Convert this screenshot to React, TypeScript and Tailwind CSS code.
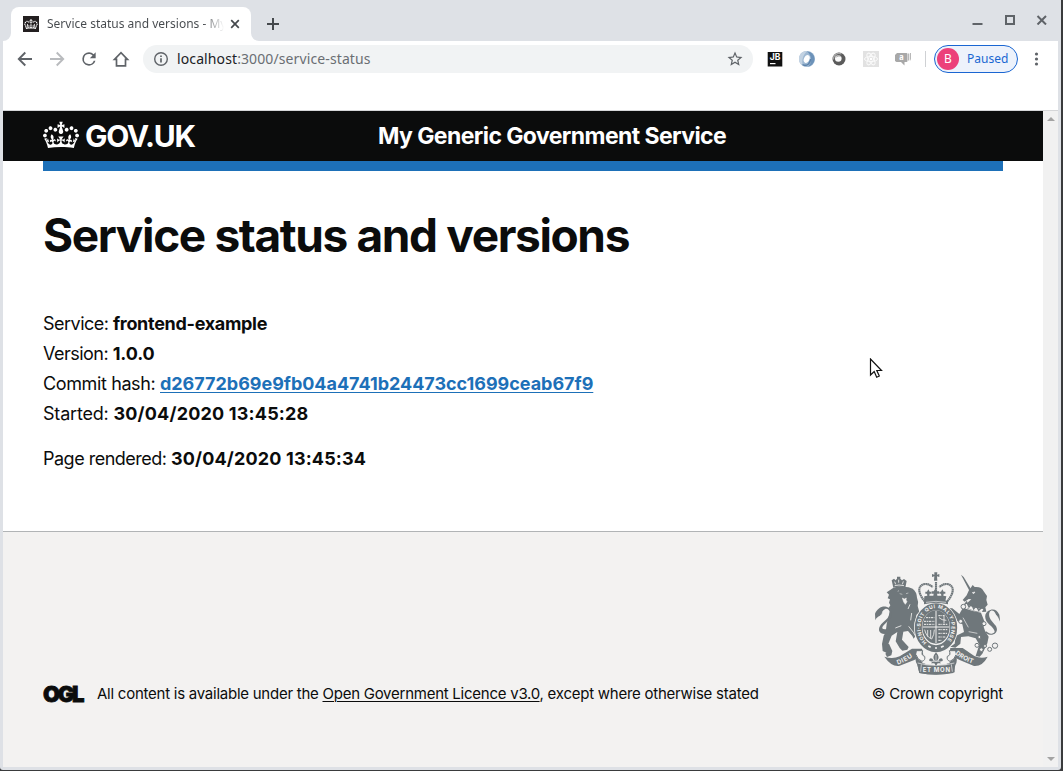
import React from "react";

const CROWN =
  "M25 30.2c3.5 1.5 7.7-.2 9.1-3.7 1.5-3.6-.2-7.8-3.9-9.2-3.6-1.4-7.6.3-9.1 3.9-1.4 3.5.3 7.5 3.9 9zM9 39.5c3.6 1.5 7.8-.2 9.2-3.7 1.5-3.6-.2-7.8-3.9-9.1-3.6-1.5-7.6.2-9.1 3.8-1.4 3.5.3 7.5 3.8 9zM4.4 57.2c3.5 1.5 7.7-.2 9.1-3.8 1.5-3.6-.2-7.7-3.9-9.1-3.5-1.5-7.6.3-9.1 3.8-1.4 3.5.3 7.6 3.9 9.1zm38.3-21.4c3.5 1.5 7.7-.2 9.1-3.8 1.5-3.6-.2-7.7-3.9-9.1-3.6-1.5-7.6.3-9.1 3.8-1.3 3.6.4 7.7 3.9 9.1zm64.4-5.6c-3.6 1.5-7.8-.2-9.1-3.7-1.5-3.6.2-7.8 3.8-9.2 3.6-1.4 7.7.3 9.2 3.9 1.3 3.5-.4 7.5-3.9 9zm15.9 9.3c-3.6 1.5-7.7-.2-9.1-3.7-1.5-3.6.2-7.8 3.7-9.1 3.6-1.5 7.7.2 9.2 3.8 1.5 3.5-.3 7.5-3.8 9zm4.7 17.7c-3.6 1.5-7.8-.2-9.2-3.8-1.5-3.6.2-7.7 3.9-9.1 3.6-1.5 7.7.3 9.2 3.8 1.3 3.5-.4 7.6-3.9 9.1zM89.3 35.8c-3.6 1.5-7.8-.2-9.2-3.8-1.4-3.6.2-7.7 3.9-9.1 3.6-1.5 7.7.3 9.2 3.8 1.4 3.6-.3 7.7-3.9 9.1zM69.7 17.7l8.9 4.7V9.3l-8.9 2.8c-.2-.3-.5-.6-.9-.9L72.4 0H59.6l3.5 11.2c-.3.3-.6.5-.9.9l-8.8-2.8v13.1l8.8-4.7c.3.3.6.7.9.9l-5 15.4v.1c-.2.8-.4 1.6-.4 2.4 0 4.1 3.1 7.5 7 8.1h.2c.3 0 .7.1 1 .1.4 0 .7 0 1-.1h.2c4-.6 7.1-4.1 7.1-8.1 0-.8-.1-1.7-.4-2.4V34l-5.1-15.4c.4-.2.7-.6 1-.9zM66 92.8c16.9 0 32.8 1.1 47.1 3.2 4-16.9 8.9-26.7 14-33.5l-9.6-3.4c1 4.9 1.1 7.2 0 10.2-1.5-1.4-3-4.3-4.2-8.7L108.6 76c2.8-2 5-3.2 7.5-3.3-4.4 9.4-10 11.9-13.6 11.2-4.3-.8-6.3-4.6-5.6-7.9 1-4.7 5.7-5.9 8-.5 4.3-8.7-3-11.4-7.6-8.8 7.1-7.2 7.9-13.5 2.1-21.1-8 6.1-8.1 12.3-4.5 20.8-4.7-5.4-12.1-2.5-9.5 6.2 3.4-5.2 7.9-2 7.2 3.1-.6 4.3-6.4 7.8-13.5 7.2-10.3-.9-10.9-8-11.2-13.8 2.5-.5 7.1 1.8 11 7.3L80.2 60c-4.1 4.4-8 5.3-12.3 5.4 1.4-4.4 8-11.6 8-11.6H55.5s6.4 7.2 7.9 11.6c-4.2-.1-8-1-12.3-5.4l1.4 16.4c3.9-5.5 8.5-7.7 10.9-7.3-.3 5.8-.9 12.8-11.1 13.8-7.2.6-12.9-2.9-13.5-7.2-.7-5 3.8-8.3 7.1-3.1 2.7-8.7-4.6-11.6-9.4-6.2 3.7-8.5 3.6-14.7-4.6-20.8-5.8 7.6-5 13.9 2.2 21.1-4.7-2.6-11.9.1-7.7 8.8 2.3-5.5 7.1-4.2 8.1.5.7 3.3-1.3 7.1-5.7 7.9-3.5.7-9-1.8-13.5-11.2 2.5.1 4.7 1.3 7.5 3.3l-4.7-15.4c-1.2 4.4-2.7 7.2-4.3 8.7-1.1-3-.9-5.3 0-10.2l-9.5 3.4c5 6.9 9.9 16.7 14 33.5 14.8-2.1 30.8-3.2 47.7-3.2z";

function Crown({ className }: { className: string }) {
  return (
    <svg viewBox="0 0 132 97" className={className} fill="currentColor">
      <path fillRule="evenodd" d={CROWN} />
    </svg>
  );
}

function TabStrip() {
  return (
    <div className="flex h-[41px] shrink-0 bg-[#dee1e6] pl-2">
      <div className="relative mt-[7px] flex h-[34px] w-[240px] items-center rounded-t-lg bg-white pl-3">
        <svg className="absolute -left-2 bottom-0 size-2 fill-white" viewBox="0 0 8 8">
          <path d="M8 0v8H0a8 8 0 0 0 8-8z" />
        </svg>
        <svg className="absolute -right-2 bottom-0 size-2 fill-white" viewBox="0 0 8 8">
          <path d="M0 0v8h8a8 8 0 0 1-8-8z" />
        </svg>
        <span className="flex size-4 items-center justify-center bg-[#231f20] text-white">
          <Crown className="h-[10px] w-[14px]" />
        </span>
        <span className="ml-2 w-[177px] whitespace-nowrap bg-gradient-to-r from-[#45494d] from-88% to-transparent bg-clip-text text-[12px] leading-5 text-transparent">
          Service status and versions - My
        </span>
        <svg className="ml-[6px] size-2.5" viewBox="0 0 10 10" stroke="#45494d" strokeWidth="1.7">
          <path d="M1.200 1.200l7.600 7.600M8.800 1.200l-7.600 7.600" />
        </svg>
      </div>
      <svg className="ml-4 mt-[18px] size-3" viewBox="0 0 12 12" stroke="#45494d" strokeWidth="2">
        <path d="M6 0v12M0 6h12" />
      </svg>
      <div className="ml-auto mr-[14px] mt-[14px] flex h-3 gap-[21px]">
        <svg className="size-[11px]" viewBox="0 0 11 11">
          <path d="M.5 9h10v2H.5z" fill="#5f6368" />
        </svg>
        <svg className="size-[11px]" viewBox="0 0 11 11" fill="none" stroke="#5f6368" strokeWidth="2">
          <path d="M2 2h8v8H2z" />
        </svg>
        <svg className="size-[11px]" viewBox="0 0 11 11" stroke="#5f6368" strokeWidth="2">
          <path d="M1.500 2l8.500 8.500M10 2l-8.500 8.500" />
        </svg>
      </div>
    </div>
  );
}

function Toolbar() {
  return (
    <div className="flex h-[70px] shrink-0 items-start border-b border-[#d5d6d8] bg-white pt-[4px]">
      <div className="flex h-7 items-center pl-[12px]">
        <svg className="size-5" viewBox="0 0 20 20" fill="none" stroke="#5f6368" strokeWidth="1.9">
          <path d="M17 10H4M10.300 3.500L3.800 10l6.500 6.500" />
        </svg>
        <svg className="ml-3 size-5" viewBox="0 0 20 20" fill="none" stroke="#b9bbbe" strokeWidth="1.9">
          <path d="M3 10h13M9.700 3.500l6.500 6.500-6.500 6.500" />
        </svg>
        <svg className="ml-3 size-5" viewBox="0 0 24 24" fill="#5f6368">
          <path d="M17.650 6.350A7.958 7.958 0 0 0 12 4a8 8 0 1 0 7.730 10h-2.080A6 6 0 1 1 12 6c1.660 0 3.140.69 4.220 1.780L13 11h7V4l-2.350 2.350z" />
        </svg>
        <svg className="ml-3 size-5" viewBox="0 0 20 20" fill="none" stroke="#5f6368" strokeWidth="1.7">
          <path d="M3.500 10.300h2v6.500h9v-6.500h2L10 3.600z" />
        </svg>
      </div>
      <div className="ml-3 flex h-7 w-[610px] items-center rounded-full bg-[#f1f3f4] pl-[10px] pr-[9px]">
        <svg className="size-4" viewBox="0 0 16 16" fill="none" stroke="#5f6368" strokeWidth="1.400">
          <circle cx="8" cy="8" r="6.300" />
          <path d="M8 7.300v4.200M8 4.500V6" strokeWidth="1.700" />
        </svg>
        <span className="ml-[8px] text-[14px] leading-5 tracking-[0.11px] text-[#6a6e73]">
          <span className="text-[#202124]">localhost</span>:3000/service-status
        </span>
        <svg className="ml-auto size-[18px]" viewBox="0 0 24 24" fill="#5f6368">
          <path d="M22 9.240l-7.190-.62L12 2 9.190 8.630 2 9.240l5.460 4.730L5.820 21 12 17.270 18.180 21l-1.630-7.030L22 9.240zM12 15.400l-3.760 2.270 1-4.280-3.320-2.880 4.380-.38L12 6.100l1.710 4.040 4.380.38-3.320 2.880 1 4.280L12 15.400z" />
        </svg>
      </div>
      <div className="flex h-7 items-center pl-[14px]">
        <svg className="size-4" viewBox="0 0 16 16">
          <rect x=".7" y="1" width="14.600" height="14.500" fill="#111" />
          <text x="2.700" y="8.700" fontSize="8.500" fontWeight="700" fill="#fff" fontFamily="Inter">JB</text>
          <path d="M3 12h5.500v1.200H3z" fill="#fff" />
        </svg>
        <svg className="ml-4 size-4" viewBox="0 0 16 16">
          <circle cx="8" cy="8" r="8" fill="#9fb9d3" />
          <path d="M8 0a8 8 0 0 0-4 15c-2-5 0-11 4-15z" fill="#c2d2e2" />
          <path d="M8 .5c5 0 7.500 4 7.500 7.500 0 4-3 7-6.500 7.500 2-2 3.500-4 3-8C11.600 4.500 10 2 8 .5z" fill="#6c92b9" />
          <path d="M3.500 13.500c2 1.500 4 1 6-.5 2-2 2-3 2-5" fill="none" stroke="#5d83ab" strokeWidth="1.500" />
          <ellipse cx="7.700" cy="8" rx="2.700" ry="4" transform="rotate(25 7.700 8)" fill="#fff" />
        </svg>
        <svg className="ml-4 size-4" viewBox="0 0 16 16">
          <circle cx="8" cy="8" r="6.500" fill="#5b5b5b" />
          <path d="M2.500 8.500a5.500 5.500 0 0 1 8-5.500" fill="none" stroke="#a5a5a5" strokeWidth="1.300" />
          <circle cx="7.300" cy="7.500" r="3.300" fill="#fafafa" />
          <path d="M5 6.500a3 3 0 0 1 4.500-1" fill="none" stroke="#999" />
        </svg>
        <svg className="ml-4 size-4" viewBox="0 0 16 16">
          <path d="M0 0h16v16H0z" fill="#e2e2e2" />
          <g fill="none" stroke="#fafafa" strokeWidth="1">
            <ellipse cx="8" cy="8" rx="6.500" ry="2.600" />
            <ellipse cx="8" cy="8" rx="6.500" ry="2.600" transform="rotate(60 8 8)" />
            <ellipse cx="8" cy="8" rx="6.500" ry="2.600" transform="rotate(120 8 8)" />
          </g>
          <circle cx="8" cy="8" r="1.300" fill="#fff" />
        </svg>
        <svg className="ml-4 size-4" viewBox="0 0 16 16">
          <path d="M2 2h9.500q1 0 1 1v7q0 1-1 1H9.500v3.500L6 11H1.500L0 10V4z" fill="#a8a8a8" />
          <path d="M13 2.500h1.300v7H13zM15 2h1v6l-1 2z" fill="#b8b8b8" />
          <text x="4.300" y="9.200" fontSize="7.500" fontWeight="700" fill="#fff" fontFamily="Inter">a</text>
        </svg>
        <span className="ml-[14px] h-4 w-px bg-[#cfd1d4]" />
        <div className="ml-2 flex h-7 w-[84px] items-center rounded-full border border-[#1a66d2] bg-[#edf2fb] pl-[2px]">
          <span className="flex size-[22px] items-center justify-center rounded-full bg-[#ec407a] text-[12px] leading-none text-white">
            B
          </span>
          <span className="ml-[8px] text-[12px] leading-5 text-[#1967d2]">Paused</span>
        </div>
        <svg className="ml-[11px] size-4" viewBox="0 0 16 16" fill="#5f6368">
          <circle cx="7.500" cy="3" r="1.600" />
          <circle cx="7.500" cy="8" r="1.600" />
          <circle cx="7.500" cy="13" r="1.600" />
        </svg>
      </div>
    </div>
  );
}

function Crest() {
  const bg = "#f3f2f1";
  const label = { fill: bg, fontFamily: "Inter", fontWeight: 700 };
  return (
    <svg className="h-[103px] w-[125px]" viewBox="45 35 375 309" fill="#6f777b">
      <defs>
        <path id="motto" d="M200.500 246A46.500 57 0 1 1 255.500 246" />
        <path id="ribbonLeft" d="M113 313Q140 304 167 283" />
        <path id="ribbonRight" d="M285 281Q312 302 346 312" />
      </defs>
      {/* imperial crown */}
      <path d="M223 36h9l-1 7 7-2v9l-7-2 1 13h-10l1-13-7 2v-9l7 2z" />
      <path d="M194 123C171 95 174 75 194 71q14-1 24 10M262 123c23-28 20-48 0-52q-14-1-24 10M228 65v58" fill="none" stroke="#6f777b" strokeWidth="6.500" strokeDasharray="5 1" />
      <path d="M193 108l9-2-1-6h-5v-6h5l4-7 4 7h5v6h-5l-1 6h12l1-6h-6v-7h6l5-8 5 8h6v7h-6l1 6h12l-1-6h-5v-6h5l4-7 4 7h5v6h-5l-1 6 9 2-3 15q-32-7-64 0z" />
      <path d="M192 122q36-10 72 0v10q-36-8-72 0z" />
      <path d="M198 126q30-6 60 0" stroke={bg} strokeWidth="2" fill="none" />
      {/* lion */}
      <path d="M100 82l-5-22 7-5 5 5 4-5 0-6h10l0 6 5 5 6-4 8 6-4 20q-17-6-36 0z" />
      <path d="M104 64l3 8M130 63l-3 9M116 58v9M104 76q12-4 28 0" stroke={bg} strokeWidth="2.500" fill="none" />
      <path d="M98 84q10-6 28-5 20-1 32 6 12 9 13 27 5 10 2 25l5 18-9 9-1 24 8 25-15 22-4-8-13-15-14 2-4 24 20 22-4 8-15 3-8-8-12-20 5-28-17 11-9 22 11 24-3 13-13 5-5-10 3-3-11-5-2-21 5-25 6-10 3-25 7-28 4-14-5-6 5-8-4-8 3-10-7-3 4-11-7-7 7-5z" />
      <path d="M127 113l6 3 6-3-1 6 3 5-5 8-5-7zM119 100l8 2M138 100l7-2M113 93l4-2" fill={bg} stroke={bg} strokeWidth="1.500" />
      <path d="M106 203l18-7M146 198l14 18 8 14M96 238l-10 12M155 158l-3 22M150 132l-6 14" fill="none" stroke={bg} strokeWidth="2.500" />
      <path d="M90 216c-24 12-40-1-30-19 8-14 30-21 29-42-1-10-12-14-19-5-4 5-1 13-11 17-5 2-10 5-13 13l-1-20c7-16 20-24 34-21 22 5 22 30 5 43-13 12-26 24-9 25 8 0 12-5 12-5z" />
      <path d="M58 169q10-8 11-17" fill="none" stroke={bg} strokeWidth="2" />
      {/* unicorn */}
      <path d="M303 43l8 7 24 40-6 3z" />
      <path d="M334 80l4-6 6 6q21-2 27 13l10 14-2 12 4 14-7 8 3 13-27 2-18-7-13-5 3-18 10-9-8-1-12 8-6-5 12-14 6-14z" />
      <path d="M312 126q26 20 58 20l-4 9q-31-1-56-20z" fill={bg} />
      <path d="M313 134l7-9 7 15 8-9 6 15 8-10 7 14 8-7" fill="none" stroke="#6f777b" strokeWidth="4" />
      <path d="M309 142q23 9 54 15l11 28-3 15 4 11 11 18-4 20-15 31-8 9-12-2 11-34-11-19-22-6-22 2-2 20-15 12-15-3 13-9 3-23 25-12-5-23-14-9-11-16-9-19-3 12 7 15-4 9-10-8-6-23 4-10 16 1 21 17z" />
      <path d="M337 97l8-2-4 5zM309 172l16 29M352 219l-26-5" fill={bg} stroke={bg} strokeWidth="2" />
      <path d="M378 218c20 15 43-3 28-23-8-11-24-24-17-40 5-9 14-4 17 4 3 9 8 7 15 27l-3-23c-6-12-15-18-27-14-22 7-18 31-4 43 13 11 26 26 8 28-6 1-13-4-17-7z" />
      <path d="M401 157l12 14" fill="none" stroke={bg} strokeWidth="2" />
      <g fill={bg} stroke="#6f777b" strokeWidth="3">
        <circle cx="351" cy="255" r="6" />
        <circle cx="364" cy="268" r="5.500" />
        <circle cx="375" cy="257" r="4.500" />
        <circle cx="389" cy="267" r="6" />
        <circle cx="405" cy="256" r="8" />
        <circle cx="358" cy="230" r="4.500" />
        <circle cx="372" cy="190" r="6" />
        <circle cx="302" cy="183" r="6" />
        <circle cx="310" cy="139" r="7" />
      </g>
      {/* garter and shield */}
      <ellipse cx="228" cy="202" rx="66" ry="75" fill={bg} />
      <ellipse cx="228" cy="202" rx="53" ry="63" fill="none" stroke="#6f777b" strokeWidth="21" />
      <text {...label} fontSize="15">
        <textPath href="#motto" textLength="256">HONI·SOIT QUI MAL·Y·PENSE</textPath>
      </text>
      <path d="M205 257l7 4M225 263h6M243 261l8-4" stroke={bg} strokeWidth="5" />
      <ellipse cx="228" cy="200" rx="41" ry="50" />
      <path d="M228 152v96M188 200h80" stroke={bg} strokeWidth="3" />
      <path d="M198 172h25M192 183h31M192 192h31M235 166h18M235 192h29M235 208h29M235 219h27M235 230h22M235 240h10" stroke={bg} strokeWidth="3" strokeDasharray="7 2 3 2" />
      <path d="M237 172q8 8 22 8M252 164v25M194 208q5 22 21 28 8-13 8-28M203 209v20M212 209v24" fill="none" stroke={bg} strokeWidth="2.500" />
      {/* ribbons */}
      <path d="M73 289q25 9 46-1l37-23h30l4 18-27 16-46 18q-22 3-44-28z" />
      <path d="M383 289q-20 7-40-2l-35-24h-37l-3 20 31 16 43 18q25 2 41-28z" />
      <path d="M170 286q-8 11 2 28l6 24q50 10 102 0l6-23q9-17 0-29l-19 23q-39 11-78 0z" />
      <path d="M196 284h64v29h-64z" fill={bg} />
      <path d="M172 312q56 14 112 0v24q-56 12-106 2z" />
      <path d="M171 271h17q-6 14 6 17 3 12-8 15-14-5-18-20M285 271h-17q6 14-6 17-3 12 8 15 14-5 18-20" fill={bg} stroke="#6f777b" strokeWidth="3" />
      <path d="M173 308q54 15 110 0M184 312l-2 22M274 312l3 22" stroke={bg} strokeWidth="2" fill="none" />
      <text {...label} fontSize="19"><textPath href="#ribbonLeft" textLength="51">DIEU</textPath></text>
      <text {...label} fontSize="19"><textPath href="#ribbonRight" textLength="60">DROIT</textPath></text>
      <text {...label} x="188" y="335" fontSize="18" textLength="82">ET MON</text>
      {/* fleur-de-lis */}
      <path d="M228 276q-14 16-3 25h-5c-3-11-14-9-12 1l5 1 4 1-4 5h10l5 8 5-8h10l-4-5 9-2c2-10-9-12-12-1h-5q11-9-3-25z" />
      <path d="M228 284v21M216 303h23" stroke={bg} strokeWidth="2" />
    </svg>
  );
}

function Page() {
  return (
    <div className="flex w-[1040px] flex-col bg-white font-['Inter',sans-serif] text-[#0b0c0c]">
      <header className="h-[50px] bg-[#0b0c0c] px-10 text-white">
        <div className="flex h-[50px] items-center">
          <Crown className="-mt-[3px] h-[28px] w-[36px]" />
          <span className="ml-[6px] w-[293px] text-[30px] font-bold leading-[49px] tracking-[-1.3px]">GOV.UK</span>
          <span className="whitespace-nowrap text-[23px] font-bold leading-[50px] tracking-[-0.59px]">
            My Generic Government Service
          </span>
        </div>
      </header>
      <div className="mx-10 h-[10px] bg-[#1d70b8]" />
      <main className="px-10">
        <h1 className="mt-[40px] whitespace-nowrap text-[46px] font-bold leading-[49px] tracking-[-1.37px]">
          Service status and versions
        </h1>
        <div className="mt-[49px] whitespace-nowrap text-[18px] leading-[30px]">
          <p><span className="tracking-[-0.52px]">Service: </span><b className="tracking-[-0.3px]">frontend-example</b></p>
          <p><span className="tracking-[-0.52px]">Version: </span><b className="tracking-[-0.1px]">1.0.0</b></p>
          <p>
            <span className="tracking-[-0.38px]">Commit hash: </span>
            <a className="font-bold tracking-[-0.03px] text-[#1d70b8] underline decoration-1 underline-offset-2">
              d26772b69e9fb04a4741b24473cc1699ceab67f9
            </a>
          </p>
          <p><span className="tracking-[-0.19px]">Started: </span><b className="tracking-[0.19px]">30/04/2020 13:45:28</b></p>
          <p className="mt-[15px]"><span className="tracking-[-0.5px]">Page rendered: </span><b className="tracking-[0.15px]">30/04/2020 13:45:34</b></p>
        </div>
      </main>
      <footer className="mt-[57px] flex flex-1 items-start justify-between border-t border-[#b1b4b6] bg-[#f3f2f1] px-10 pt-10">
        <div className="mt-[112px] flex h-5 items-center whitespace-nowrap text-[15px] leading-5">
          <span className="w-[54px] text-[22px] font-black leading-5 tracking-[-2.300px] [-webkit-text-stroke:0.8px_#0b0c0c]">OGL</span>
          <span className="tracking-[-0.25px]">
            All content is available under the{" "}
            <a className="underline decoration-1 underline-offset-2">Open Government Licence v3.0</a>, except where
            otherwise stated
          </span>
        </div>
        <div className="flex flex-col items-end">
          <div className="mr-[3px]"><Crest /></div>
          <span className="mt-[9px] whitespace-nowrap text-[15px] leading-5 tracking-[-0.27px]">© Crown copyright</span>
        </div>
      </footer>
    </div>
  );
}

function Scrollbar() {
  return (
    <div className="flex w-[15px] flex-col items-center justify-between bg-[#f1f1f1] py-[6px]">
      <svg className="h-1 w-2" viewBox="0 0 8 4" fill="#a3a3a3"><path d="M4 0l4 4H0z" /></svg>
      <svg className="h-1 w-2" viewBox="0 0 8 4" fill="#a3a3a3"><path d="M4 4l4-4H0z" /></svg>
    </div>
  );
}

export default function App() {
  return (
    <div className="relative h-[771px] w-[1063px] overflow-hidden bg-[#3a3b3d] pb-px pr-[2px] font-['Noto_Sans',sans-serif]">
      <div className="flex h-[770px] flex-col overflow-hidden rounded-b-[3px] bg-[#dee1e6] pb-[3px] pl-[3px] pr-[3px]">
        <div className="-mr-[3px] flex flex-col">
          <TabStrip />
        </div>
        <Toolbar />
        <div className="flex min-h-0 flex-1">
          <Page />
          <Scrollbar />
        </div>
      </div>
      <svg className="absolute left-[869px] top-[358px] h-[21px] w-[14px]" viewBox="0 0 14 21">
        <path d="M1.500 1v16l3.700-3.500 2.500 5.700 2.600-1.200-2.500-5.500h4.700z" fill="#fff" stroke="#111" strokeWidth="1.200" />
      </svg>
    </div>
  );
}
